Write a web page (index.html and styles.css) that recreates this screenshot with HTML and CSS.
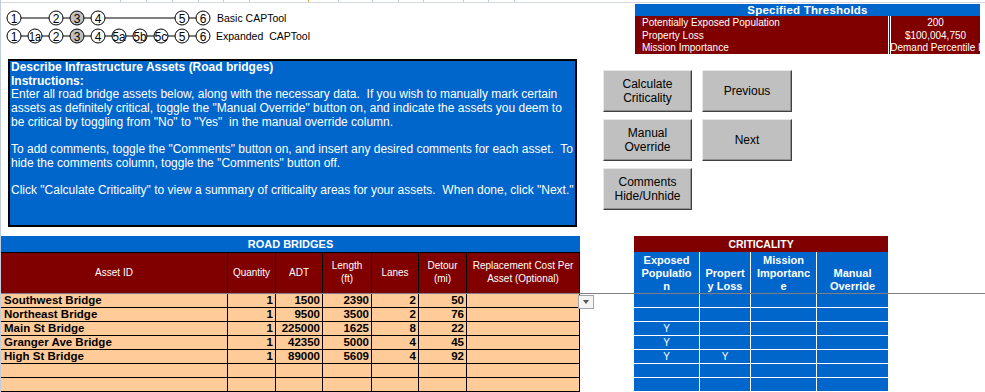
FILE: index.html
```html
<!DOCTYPE html>
<html lang="en">
<head>
    <meta charset="UTF-8">
    <title>CAPTool - Road Bridges</title>
    <link rel="stylesheet" href="styles.css">
</head>
<body>
    <div class="gridstrip">
        <span style="width:119px"></span><span style="width:25px"></span><span style="width:25px"></span><span style="width:25px"></span><span style="width:24px"></span><span style="width:25px"></span><span class="sel" style="width:58px"></span><span style="width:29px"></span><span style="width:33px"></span><span style="width:25px"></span><span style="width:24px"></span><span style="width:39px"></span><span style="width:24px"></span><span style="width:25px"></span>
    </div>

    <div class="top">
        <svg class="steps" width="340" height="52" viewBox="0 0 340 52">
            <g stroke="#000" stroke-width="1">
                <line x1="20" y1="15" x2="196" y2="15"/>
                <line x1="20" y1="33" x2="196" y2="33"/>
            </g>
            <g class="step" stroke="#000" stroke-width="1">
                <circle cx="13" cy="15" r="7" fill="#fff"/>
                <circle cx="55" cy="15" r="7" fill="#fff"/>
                <circle cx="76" cy="15" r="7" fill="#c0c0c0"/>
                <circle cx="97" cy="15" r="7" fill="#fff"/>
                <circle cx="181" cy="15" r="7" fill="#fff"/>
                <circle cx="202" cy="15" r="7" fill="#fff"/>

                <circle cx="13" cy="33" r="7" fill="#fff"/>
                <circle cx="34" cy="33" r="7" fill="#fff"/>
                <circle cx="55" cy="33" r="7" fill="#fff"/>
                <circle cx="76" cy="33" r="7" fill="#c0c0c0"/>
                <circle cx="97" cy="33" r="7" fill="#fff"/>
                <circle cx="118" cy="33" r="7" fill="#fff"/>
                <circle cx="139" cy="33" r="7" fill="#fff"/>
                <circle cx="160" cy="33" r="7" fill="#fff"/>
                <circle cx="181" cy="33" r="7" fill="#fff"/>
                <circle cx="202" cy="33" r="7" fill="#fff"/>
            </g>
            <g class="step-num" text-anchor="middle">
                <text x="13" y="19.5">1</text>
                <text x="55" y="19.5">2</text>
                <text x="76" y="19.5">3</text>
                <text x="97" y="19.5">4</text>
                <text x="181" y="19.5">5</text>
                <text x="202" y="19.5">6</text>

                <text x="13" y="37.5">1</text>
                <text x="34" y="37.5" textLength="12" lengthAdjust="spacingAndGlyphs">1a</text>
                <text x="55" y="37.5">2</text>
                <text x="76" y="37.5">3</text>
                <text x="97" y="37.5">4</text>
                <text x="118" y="37.5" textLength="13" lengthAdjust="spacingAndGlyphs">5a</text>
                <text x="139" y="37.5" textLength="13" lengthAdjust="spacingAndGlyphs">5b</text>
                <text x="160" y="37.5" textLength="13" lengthAdjust="spacingAndGlyphs">5c</text>
                <text x="181" y="37.5">5</text>
                <text x="202" y="37.5">6</text>
            </g>
            <text class="step-label" x="216" y="19">Basic CAPTool</text>
            <text class="step-label" x="215" y="37" xml:space="preserve">Expanded  CAPTool</text>
        </svg>

        <div class="thresholds">
            <div class="thr-title">Specified Thresholds</div>
            <div class="thr-row">
                <div class="thr-label">Potentially Exposed Population</div>
                <div class="thr-value"><span>200</span></div>
            </div>
            <div class="thr-row">
                <div class="thr-label">Property Loss</div>
                <div class="thr-value"><span>$100,004,750</span></div>
            </div>
            <div class="thr-row">
                <div class="thr-label">Mission Importance</div>
                <div class="thr-value"><span>Demand Percentile I</span></div>
            </div>
        </div>
    </div>

    <div class="middle">
        <div class="instructions">
            <div class="line bold">Describe Infrastructure Assets (Road bridges)</div>
            <div class="line bold">Instructions:</div>
            <div class="line">Enter all road bridge assets below, along with the necessary data.  If you wish to manually mark certain</div>
            <div class="line">assets as definitely critical, toggle the "Manual Override" button on, and indicate the assets you deem to</div>
            <div class="line">be critical by toggling from "No" to "Yes"  in the manual override column.</div>
            <div class="line blank"></div>
            <div class="line">To add comments, toggle the "Comments" button on, and insert any desired comments for each asset.  To</div>
            <div class="line">hide the comments column, toggle the "Comments" button off.</div>
            <div class="line blank"></div>
            <div class="line">Click "Calculate Criticality" to view a summary of criticality areas for your assets.  When done, click "Next."</div>
        </div>

        <div class="buttons">
            <button class="btn">Calculate<br>Criticality</button>
            <button class="btn">Previous</button>
            <button class="btn">Manual<br>Override</button>
            <button class="btn">Next</button>
            <button class="btn">Comments<br>Hide/Unhide</button>
        </div>
    </div>

    <div class="tables">
        <table class="bridges">
            <colgroup>
                <col style="width:227px"><col style="width:48px"><col style="width:47px"><col style="width:49px"><col style="width:47px"><col style="width:48px"><col style="width:113px">
            </colgroup>
            <tr class="title"><th colspan="7">ROAD BRIDGES</th></tr>
            <tr class="head">
                <th>Asset ID</th>
                <th>Quantity</th>
                <th>ADT</th>
                <th>Length<br>(ft)</th>
                <th>Lanes</th>
                <th>Detour<br>(mi)</th>
                <th>Replacement Cost Per<br>Asset (Optional)</th>
            </tr>
            <tr><td class="name">Southwest Bridge</td><td>1</td><td>1500</td><td>2390</td><td>2</td><td>50</td><td></td></tr>
            <tr><td class="name">Northeast Bridge</td><td>1</td><td>9500</td><td>3500</td><td>2</td><td>76</td><td></td></tr>
            <tr><td class="name">Main St Bridge</td><td>1</td><td>225000</td><td>1625</td><td>8</td><td>22</td><td></td></tr>
            <tr><td class="name">Granger Ave Bridge</td><td>1</td><td>42350</td><td>5000</td><td>4</td><td>45</td><td></td></tr>
            <tr><td class="name">High St Bridge</td><td>1</td><td>89000</td><td>5609</td><td>4</td><td>92</td><td></td></tr>
            <tr><td class="name"></td><td></td><td></td><td></td><td></td><td></td><td></td></tr>
            <tr><td class="name"></td><td></td><td></td><td></td><td></td><td></td><td></td></tr>
        </table>

        <table class="criticality">
            <colgroup>
                <col style="width:66px"><col style="width:51px"><col style="width:66px"><col style="width:71px">
            </colgroup>
            <tr class="title"><th colspan="4">CRITICALITY</th></tr>
            <tr class="head">
                <th>Exposed<br>Populatio<br>n</th>
                <th>Propert<br>y Loss</th>
                <th>Mission<br>Importanc<br>e</th>
                <th>Manual<br>Override</th>
            </tr>
            <tr><td></td><td></td><td></td><td></td></tr>
            <tr><td></td><td></td><td></td><td></td></tr>
            <tr><td>Y</td><td></td><td></td><td></td></tr>
            <tr><td>Y</td><td></td><td></td><td></td></tr>
            <tr><td>Y</td><td>Y</td><td></td><td></td></tr>
            <tr><td></td><td></td><td></td><td></td></tr>
            <tr><td></td><td></td><td></td><td></td></tr>
        </table>
    </div>

    <div class="freeze-line"></div>
    <div class="dropdown"><span class="caret"></span></div>
</body>
</html>
```

FILE: styles.css
```css
body {
    margin: 0;
    width: 984px;
    height: 392px;
    overflow: hidden;
    position: relative;
    background-color: #fff;
    border-left: 1px solid #c3cedd;
    font-family: "Liberation Sans", Arial, sans-serif;
}

/* sheet column strip along the top */
.gridstrip {
    display: flex;
    height: 2px;
    border-bottom: 1px solid #d4d9e2;
}

.gridstrip span {
    border-right: 1px solid #c6ccd6;
}

.gridstrip span.sel {
    border-right-color: #e59a3c;
}

/* step diagram + thresholds */
.top {
    display: flex;
    height: 52px;
}

.steps {
    display: block;
    flex-shrink: 0;
}

.step-num {
    font-family: "Liberation Sans", Arial, sans-serif;
    font-size: 12px;
}

.step-label {
    font-family: "Liberation Sans", Arial, sans-serif;
    font-size: 10.5px;
}

.thresholds {
    margin-left: auto;
    margin-right: 5px;
    margin-top: 1px;
    width: 345px;
}

.thr-title {
    height: 12px;
    line-height: 12px;
    background-color: #0066cc;
    color: #fff;
    font-size: 11.5px;
    font-weight: bold;
    text-align: center;
    letter-spacing: 0.2px;
}

.thr-row {
    display: flex;
    height: 13px;
    line-height: 13px;
    background-color: #800000;
    color: #fff;
    font-size: 10px;
}

.thr-row:last-child {
    height: 12px;
    line-height: 12px;
}

.thr-label {
    width: 253px;
    padding-left: 7px;
    box-sizing: border-box;
}

.thr-value {
    flex: 1;
    display: flex;
    justify-content: center;
    overflow: hidden;
    white-space: nowrap;
    border-left: 3px double #fff;
}

.thr-value span {
    flex-shrink: 0;
}

/* instructions + buttons */
.middle {
    display: flex;
    margin-top: 4px;
}

.instructions {
    margin-left: 7px;
    width: 569px;
    height: 168px;
    box-sizing: border-box;
    border: 2px solid #000;
    background-color: #0066cc;
    color: #fff;
    font-size: 12px;
    line-height: 13.7px;
    padding: 0 1px;
}

.instructions .line {
    white-space: pre;
}

.instructions .bold {
    font-weight: bold;
}

.instructions .blank {
    height: 13.7px;
}

.buttons {
    display: grid;
    grid-template-columns: 89px 90px;
    grid-auto-rows: 42px;
    column-gap: 10px;
    row-gap: 7px;
    margin-left: 26px;
    margin-top: 11px;
    align-content: start;
}

.btn {
    display: flex;
    align-items: center;
    justify-content: center;
    padding: 0;
    background-color: #c0c0c0;
    border: 1px solid;
    border-color: #e8e8e8 #404040 #404040 #e8e8e8;
    box-shadow: inset -1px -1px 0 #909090;
    color: #000;
    font-family: "Liberation Sans", Arial, sans-serif;
    font-size: 12px;
    line-height: 14px;
    text-align: center;
}

/* tables */
.tables {
    display: flex;
    align-items: flex-start;
    margin-top: 9px;
}

table {
    border-collapse: separate;
    border-spacing: 0;
    table-layout: fixed;
}

th, td {
    padding: 0;
    overflow: hidden;
    white-space: nowrap;
}

.bridges {
    width: 579px;
}

.bridges .title th {
    height: 16px;
    background-color: #0066cc;
    border-bottom: 1px solid #000;
    color: #fff;
    font-size: 11px;
    font-weight: bold;
}

.bridges .head th {
    height: 40px;
    background-color: #800000;
    border-right: 1px solid #000;
    border-bottom: 1px solid #000;
    color: #fff;
    font-size: 10px;
    font-weight: normal;
    line-height: 12.6px;
}

.bridges td {
    height: 13px;
    line-height: 13px;
    background-color: #ffcc99;
    border-right: 1px solid #000;
    border-bottom: 1px solid #000;
    font-size: 11.5px;
    font-weight: bold;
    text-align: right;
    padding-right: 2px;
}

.bridges td.name {
    text-align: left;
    padding-left: 3px;
}

.criticality {
    width: 254px;
    margin-left: 54px;
}

.criticality .title th {
    height: 16px;
    background-color: #800000;
    color: #fff;
    font-size: 10.5px;
    font-weight: bold;
}

.criticality .head th {
    height: 41px;
    vertical-align: bottom;
    background-color: #0066cc;
    border-right: 1px solid #fff;
    border-bottom: 1px solid #fff;
    color: #fff;
    font-size: 11px;
    font-weight: bold;
    line-height: 13px;
}

.criticality td {
    height: 13px;
    line-height: 13px;
    background-color: #0066cc;
    border-right: 1px solid #fff;
    border-bottom: 1px solid #fff;
    color: #fff;
    font-size: 10px;
    text-align: center;
}

.criticality th:last-child,
.criticality td:last-child {
    border-right: none;
}

/* frozen pane split and the cell dropdown */
.freeze-line {
    position: absolute;
    left: 0;
    right: 0;
    top: 293px;
    height: 1px;
    background-color: #7f7f7f;
}

.dropdown {
    position: absolute;
    left: 577px;
    top: 295px;
    width: 14px;
    height: 12px;
    border: 1px solid #a0a6b0;
    background-color: #f4f4f4;
}

.caret {
    position: absolute;
    left: 4px;
    top: 4px;
    border-left: 3px solid transparent;
    border-right: 3px solid transparent;
    border-top: 4px solid #555;
}
```
